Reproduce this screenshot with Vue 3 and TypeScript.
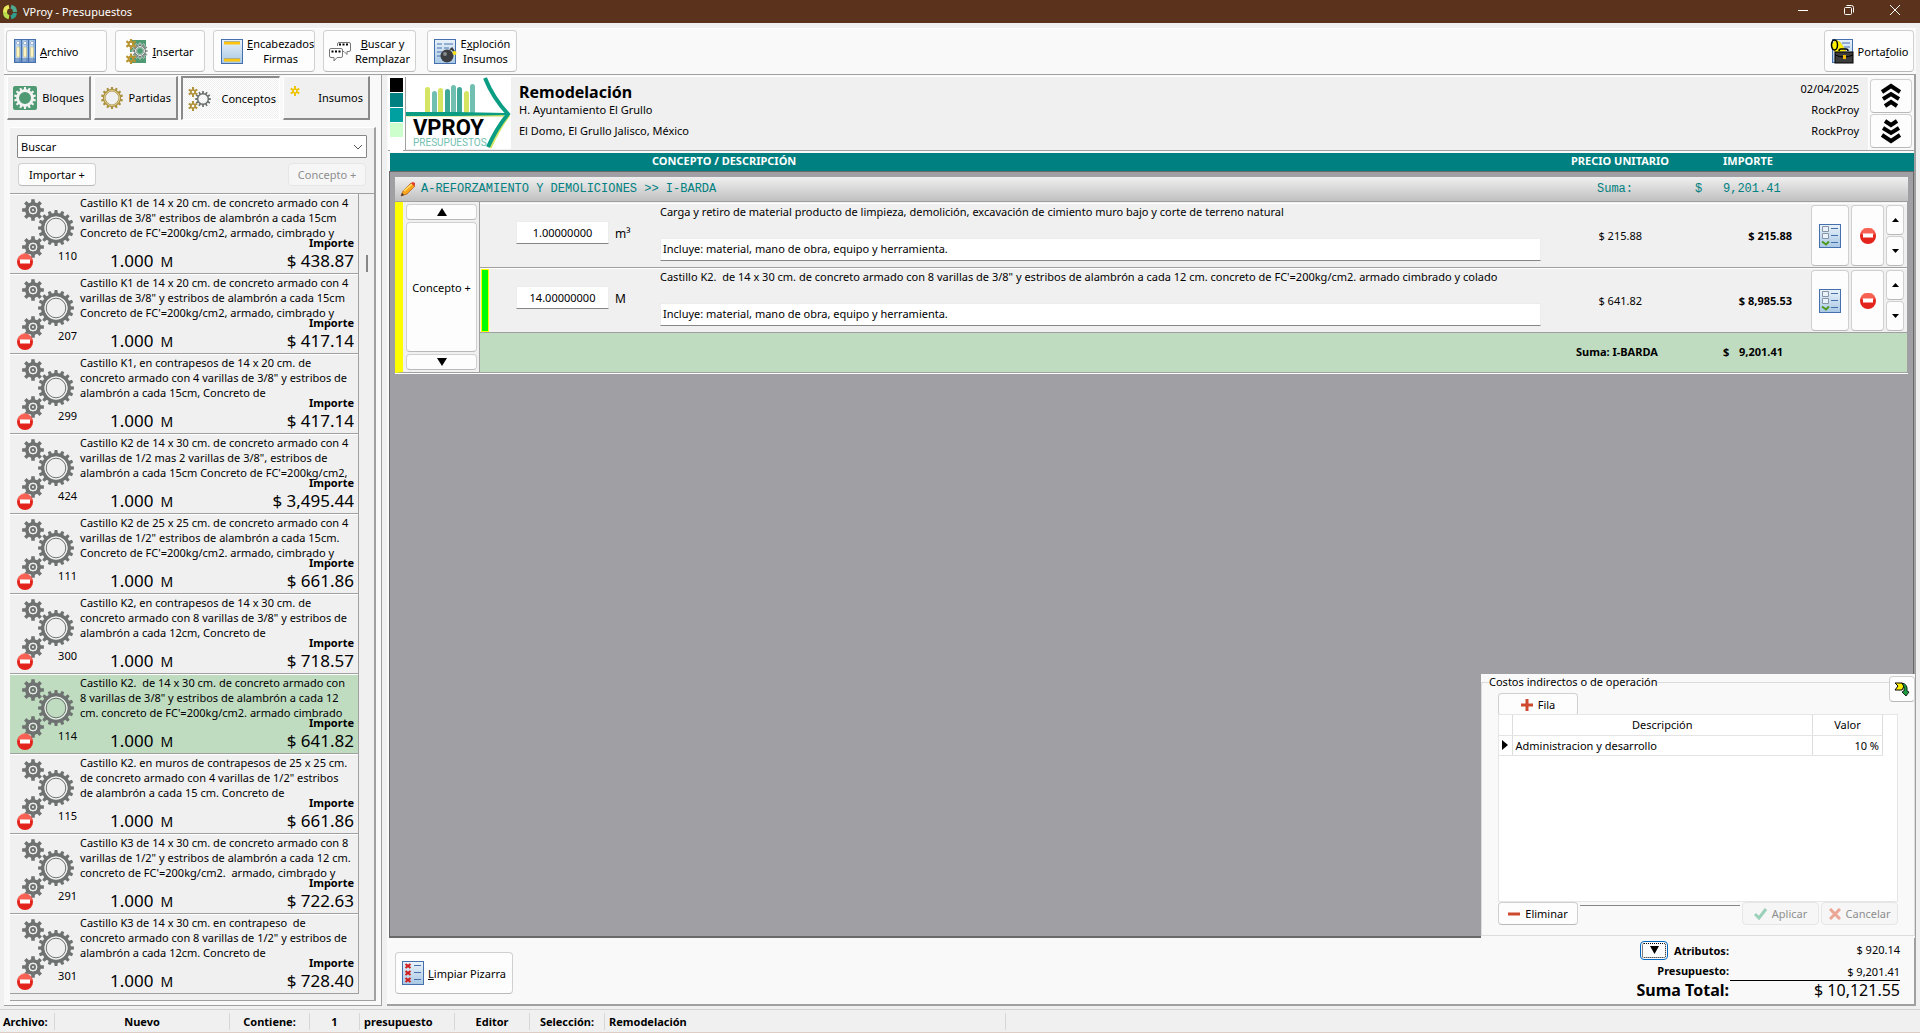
<script setup lang="ts">
interface Concept { id: number; lines: string[]; price: string; selected?: boolean }
interface Row { qty: string; unit: string; desc: string; note: string; unitPrice: string; amount: string; marked: boolean }

const gear = (cx: number, cy: number, outer: number, inner: number, teeth: number, hole = 0): string => {
  const step = (Math.PI * 2) / teeth
  const at = (r: number, a: number) => `${(cx + r * Math.sin(a)).toFixed(2)} ${(cy - r * Math.cos(a)).toFixed(2)}`
  const pts: string[] = []
  for (let i = 0; i < teeth; i++) {
    const a = i * step
    pts.push(at(inner, a - step * 0.3), at(outer, a - step * 0.2), at(outer, a + step * 0.2), at(inner, a + step * 0.3))
  }
  let d = 'M' + pts.join('L') + 'Z'
  if (hole) d += `M${cx - hole} ${cy}a${hole} ${hole} 0 1 0 ${hole * 2} 0a${hole} ${hole} 0 1 0 ${-hole * 2} 0Z`
  return d
}

const concepts: Concept[] = [
  { id: 110, lines: ['Castillo K1 de 14 x 20 cm. de concreto armado con 4', 'varillas de 3/8" estribos de alambrón a cada 15cm', "Concreto de FC'=200kg/cm2, armado, cimbrado y"], price: '438.87' },
  { id: 207, lines: ['Castillo K1 de 14 x 20 cm. de concreto armado con 4', 'varillas de 3/8" y estribos de alambrón a cada 15cm', "Concreto de FC'=200kg/cm2, armado, cimbrado y"], price: '417.14' },
  { id: 299, lines: ['Castillo K1, en contrapesos de 14 x 20 cm. de', 'concreto armado con 4 varillas de 3/8" y estribos de', 'alambrón a cada 15cm, Concreto de'], price: '417.14' },
  { id: 424, lines: ['Castillo K2 de 14 x 30 cm. de concreto armado con 4', 'varillas de 1/2 mas 2 varillas de 3/8", estribos de', "alambrón a cada 15cm Concreto de FC'=200kg/cm2,"], price: '3,495.44' },
  { id: 111, lines: ['Castillo K2 de 25 x 25 cm. de concreto armado con 4', 'varillas de 1/2" estribos de alambrón a cada 15cm.', "Concreto de FC'=200kg/cm2. armado, cimbrado y"], price: '661.86' },
  { id: 300, lines: ['Castillo K2, en contrapesos de 14 x 30 cm. de', 'concreto armado con 8 varillas de 3/8" y estribos de', 'alambrón a cada 12cm, Concreto de'], price: '718.57' },
  { id: 114, lines: ['Castillo K2.  de 14 x 30 cm. de concreto armado con', '8 varillas de 3/8" y estribos de alambrón a cada 12', "cm. concreto de FC'=200kg/cm2. armado cimbrado"], price: '641.82', selected: true },
  { id: 115, lines: ['Castillo K2. en muros de contrapesos de 25 x 25 cm.', 'de concreto armado con 4 varillas de 1/2" estribos', 'de alambrón a cada 15 cm. Concreto de'], price: '661.86' },
  { id: 291, lines: ['Castillo K3 de 14 x 30 cm. de concreto armado con 8', 'varillas de 1/2" y estribos de alambrón a cada 12 cm.', "concreto de FC'=200kg/cm2.  armado, cimbrado y"], price: '722.63' },
  { id: 301, lines: ['Castillo K3 de 14 x 30 cm. en contrapeso  de', 'concreto armado con 8 varillas de 1/2" y estribos de', 'alambrón a cada 12cm. Concreto de'], price: '728.40' },
]

const note = 'Incluye: material, mano de obra, equipo y herramienta.'
const rows: Row[] = [
  { qty: '1.00000000', unit: 'm³', desc: 'Carga y retiro de material producto de limpieza, demolición, excavación de cimiento muro bajo y corte de terreno natural', note, unitPrice: '$ 215.88', amount: '$ 215.88', marked: false },
  { qty: '14.00000000', unit: 'M', desc: "Castillo K2.  de 14 x 30 cm. de concreto armado con 8 varillas de 3/8\" y estribos de alambrón a cada 12 cm. concreto de FC'=200kg/cm2. armado cimbrado y colado", note, unitPrice: '$ 641.82', amount: '$ 8,985.53', marked: true },
]

const bars = [
  { x: 19, y: 13, c: '#d5e563' }, { x: 26, y: 17, c: '#71bfb1' }, { x: 32, y: 14, c: '#d5e563' }, { x: 39, y: 15, c: '#3fa797' },
  { x: 45, y: 11, c: '#71bfb1' }, { x: 51, y: 13, c: '#3fa797' }, { x: 58, y: 17, c: '#d5e563' }, { x: 64, y: 10, c: '#71bfb1' },
]
</script>

<template>
  <div class="app">
    <header class="titlebar">
      <svg width="14" height="16" viewBox="0 0 14 16" fill="none" stroke-width="4">
        <path d="M6 2.600A5 5.400 0 0 0 2 8" stroke="#e8e65a" /><path d="M2 8a5 5.400 0 0 0 4 5.300" stroke="#b9dd4a" />
        <path d="M8 13.400A5 5.400 0 0 0 12 9" stroke="#2f9e8f" /><path d="M12 8A5 5.400 0 0 0 8 2.600" stroke="#4fa98f" />
      </svg>
      <h1>VProy - Presupuestos</h1>
      <div class="winbtns">
        <button aria-label="Minimizar"><svg width="12" height="12"><path d="M1 6.500h10" stroke="#fff" /></svg></button>
        <button aria-label="Restaurar"><svg width="12" height="12" fill="none" stroke="#fff"><rect x="1.500" y="3.500" width="7" height="7" rx="1" /><path d="M3.500 1.500h5q2 0 2 2v5" /></svg></button>
        <button aria-label="Cerrar"><svg width="12" height="12"><path d="M1 1l10 10M11 1L1 11" stroke="#fff" /></svg></button>
      </div>
    </header>

    <nav class="toolbar">
      <button class="btn tool w-archivo">
        <svg width="22" height="25" viewBox="0 0 22 25">
          <g v-for="i in 3" :key="i" :transform="`translate(${(i - 1) * 7} 0)`">
            <rect x=".5" y=".5" width="7" height="23" fill="#8fb4dd" stroke="#4670ad" /><rect x="2" y="1.500" width="3" height="21" fill="#c3d9ef" />
            <circle cx="4" cy="4" r="1.600" fill="#fff" stroke="#7a93b5" stroke-width=".6" /><rect x="2.500" y="8" width="3" height="10" rx="1" fill="#fbf3c0" stroke="#c5b97a" stroke-width=".5" />
            <path d="M1 20h6M1 22h6" stroke="#4670ad" />
          </g>
        </svg>
        <span><u>A</u>rchivo</span>
      </button>
      <button class="btn tool w-insertar">
        <svg width="22" height="25" viewBox="0 0 22 25">
          <path d="M4 1h16v23H4v-6l4-2v-3H4V9l4-1z" fill="#4f9a72" />
          <path :d="gear(14, 12, 8, 6, 12, 3.400)" fill="#6c7270" fill-rule="evenodd" stroke="#e8f0ea" stroke-width=".6" /><circle cx="14" cy="12" r="4.500" fill="none" stroke="#e8f0ea" />
          <path :d="gear(5, 5, 5.500, 3.500, 6, 1.300)" fill="#b8932f" fill-rule="evenodd" /><path :d="gear(5, 20, 5.500, 3.500, 6, 1.300)" fill="#b8932f" fill-rule="evenodd" />
        </svg>
        <span><u>I</u>nsertar</span>
      </button>
      <button class="btn tool w-encab">
        <svg width="22" height="25" viewBox="0 0 22 25">
          <defs><linearGradient id="sheet" x1="0" y1="0" x2="0" y2="1"><stop offset="0" stop-color="#e9f2fa" /><stop offset="1" stop-color="#a9c8e4" /></linearGradient></defs>
          <rect x=".5" y=".5" width="21" height="24" fill="url(#sheet)" stroke="#4670ad" /><path d="M3 4h16M3 21h16" stroke="#fcc40c" stroke-width="3" />
          <path d="M3 2.500h16M3 19.500h16" stroke="#8b9a93" stroke-width=".6" />
        </svg>
        <span><u>E</u>ncabezados<br>Firmas</span>
      </button>
      <button class="btn tool w-buscar">
        <svg width="22" height="24" viewBox="0 0 22 24" fill="#fff" stroke="#777">
          <path d="M8.500 7V5q0-1.500 1.500-1.500h10q1.500 0 1.500 1.500v6q0 1.500-1.500 1.500h-2v3l-3-3h-3" />
          <path d="M2 9.500h10q1.500 0 1.500 1.500v6q0 1.500-1.500 1.500H8l-3 3.500v-3.500H2q-1.500 0-1.500-1.500v-6Q.5 9.500 2 9.500z" />
          <path d="M10 5.500h9M2.500 12.500h9" stroke="#000" stroke-width="2" stroke-dasharray="2 1.500" />
        </svg>
        <span><u>B</u>uscar y<br>Remplazar</span>
      </button>
      <button class="btn tool w-explo">
        <svg width="23" height="25" viewBox="0 0 23 25">
          <rect x=".5" y=".5" width="21" height="24" fill="url(#sheet)" stroke="#4670ad" /><path d="M3 5h5M10 5h9M3 9h5M10 9h5M3 13h5M3 17h4" stroke="#4670ad" />
          <circle cx="13" cy="17" r="6.500" fill="#3b3d40" /><circle cx="11" cy="15" r="2" fill="#85888c" /><path d="M16 11l2-1.500 2 3" stroke="#3b3d40" stroke-width="2" fill="none" />
          <circle cx="20.500" cy="14" r="2" fill="#f6e21b" />
        </svg>
        <span>E<u>x</u>ploción<br>Insumos</span>
      </button>
      <button class="btn tool w-porta">
        <svg width="24" height="25" viewBox="0 0 24 25">
          <rect x="2.500" y=".5" width="20" height="23" fill="url(#sheet)" stroke="#4670ad" /><path d="M12 4h8M14 8h6" stroke="#4670ad" />
          <path d="M1 6l5-5 4 2 6 9-11 1-2-4z" fill="#fff000" stroke="#c8b400" stroke-width=".5" /><ellipse cx="4.500" cy="6" rx="3" ry="5" fill="none" stroke="#000" stroke-width="1.500" />
          <path d="M9 12q0-2 2-2h5q2 0 2 2" fill="none" stroke="#000" stroke-width="1.500" />
          <rect x="5" y="13" width="18" height="11" fill="#3c3c3c" stroke="#000" /><path d="M5 16q9 4 18 0" stroke="#000" fill="none" /><rect x="13" y="16" width="3" height="4" fill="#f5b800" />
        </svg>
        <span>Porta<u>f</u>olio</span>
      </button>
    </nav>

    <main class="work">
      <aside class="side">
        <div class="tabs">
          <button class="tab w-a">
            <svg width="24" height="24" viewBox="0 0 24 24"><rect width="24" height="24" rx="2" fill="#4f9a72" /><path :d="gear(12, 12, 11, 8.800, 14, 6)" fill="#f3f3f3" fill-rule="evenodd" /></svg>
            <span>Bloques</span>
          </button>
          <button class="tab w-a">
            <svg width="24" height="24" viewBox="0 0 24 24"><path :d="gear(12, 12, 11, 9, 14, 6.400)" fill="#ac923f" fill-rule="evenodd" /><circle cx="12" cy="12" r="7.500" fill="none" stroke="#e9dfae" stroke-width=".8" /></svg>
            <span>Partidas</span>
          </button>
          <button class="tab w-b on">
            <svg width="24" height="24" viewBox="0 0 24 24">
              <path :d="gear(15, 12, 8, 6, 12, 4.600)" fill="#6c7270" fill-rule="evenodd" />
              <path :d="gear(5, 5, 5, 3, 6, 1.300)" fill="#b09239" fill-rule="evenodd" /><path :d="gear(5, 19, 5, 3, 6, 1.300)" fill="#b09239" fill-rule="evenodd" />
            </svg>
            <span>Conceptos</span>
          </button>
          <button class="tab w-c">
            <svg width="24" height="24" viewBox="0 0 24 24"><path :d="gear(6, 5, 5, 2.800, 6, 1.200)" fill="#eec400" fill-rule="evenodd" /></svg>
            <span>Insumos</span>
          </button>
        </div>

        <section class="panel">
          <div class="search">
            <select aria-label="Buscar"><option>Buscar</option></select>
            <svg width="10" height="6"><path d="M1 1l4 4 4-4" fill="none" stroke="#555" /></svg>
          </div>
          <div class="actions">
            <button class="btn">Importar +</button>
            <button class="btn" disabled>Concepto +</button>
          </div>
          <div class="listwrap">
            <ul class="list">
              <li v-for="c in concepts" :key="c.id" :class="{ sel: c.selected }">
                <div class="pic">
                  <svg width="66" height="76" viewBox="0 0 66 76">
                    <g fill="#6e7270" fill-rule="evenodd">
                      <path :d="gear(22, 15, 11, 8, 8, 4)" /><path :d="gear(22, 52, 11, 8, 8, 4)" /><path :d="gear(45, 33, 18, 15, 16, 11.500)" />
                    </g>
                    <g fill="none" stroke="#f2f2f2"><circle cx="22" cy="15" r="4" /><circle cx="22" cy="52" r="4" /><circle cx="45" cy="33" r="11" /></g>
                    <g fill="none" stroke="#6e7270"><circle cx="22" cy="15" r="2" stroke-width="2" /><circle cx="22" cy="52" r="2" stroke-width="2" /><circle cx="45" cy="33" r="9.800" /></g>
                    <circle cx="14" cy="67" r="8" fill="#e3241d" /><path d="M7 65a7 7 0 0 1 14 0q-7 4-14 0z" fill="#ff7a6b" opacity=".7" /><rect x="9" y="64.500" width="10" height="4" fill="#fff" />
                  </svg>
                  <span>{{ c.id }}</span>
                </div>
                <div class="info">
                  <p>{{ c.lines.join('\n') }}</p>
                  <b>Importe</b>
                  <div class="nums"><span class="big">1.000</span><span class="mid">M</span><span class="big end">$ {{ c.price }}</span></div>
                </div>
              </li>
            </ul>
            <div class="scroll"><i></i></div>
          </div>
        </section>
      </aside>

      <section class="main">
        <header class="head">
          <div class="swatches"><i class="c1"></i><i class="c2"></i><i class="c3"></i><i class="c4"></i><i class="c5"></i></div>
          <svg class="logo" width="105" height="72" viewBox="0 0 105 72">
            <rect v-for="b in bars" :key="b.x" :x="b.x" :y="b.y - 3" width="5" :height="40 - b.y" rx="2.500" :fill="b.c" />
            <path d="M0 38.500h98" stroke="#c9dd5a" stroke-width="2" /><path d="M0 36h50l50 1-50 1H0z" stroke="#0a9d84" stroke-width="2" fill="#0a9d84" />
            <path d="M84 71q9-20 19-33" fill="none" stroke="#d5e563" stroke-width="3" />
            <path d="M79 1q8 20 23 36-12 15-20 33" fill="none" stroke="#0a9d84" stroke-width="4" />
            <text x="7" y="58" font-family="Roboto, sans-serif" font-weight="700" font-size="22">VPROY</text>
            <text x="7" y="69" font-family="Roboto, sans-serif" font-size="10" fill="#71bfb1">PRESUPUESTOS</text>
          </svg>
          <div class="project"><h2>Remodelación</h2><p>H. Ayuntamiento El Grullo</p><p class="addr">El Domo, El Grullo Jalisco, México</p></div>
          <div class="meta"><span>02/04/2025</span><span>RockProy</span><span>RockProy</span></div>
          <div class="updown">
            <button class="btn" aria-label="Contraer"><svg width="22" height="26" fill="none" stroke="#000" stroke-width="4"><path d="M2 9l9-6 9 6M3 16l8-5 8 5M5 23l6-4 6 4" /></svg></button>
            <button class="btn" aria-label="Expandir"><svg width="22" height="26" fill="none" stroke="#000" stroke-width="4"><path d="M2 17l9 6 9-6M3 10l8 5 8-5M5 3l6 4 6-4" /></svg></button>
          </div>
        </header>

        <div class="colhead"><span>CONCEPTO / DESCRIPCIÓN</span><span>PRECIO UNITARIO</span><span>IMPORTE</span></div>

        <div class="canvas">
          <article class="block">
            <div class="bhead">
              <svg width="16" height="16" viewBox="0 0 16 16"><path d="M1 15l2-5 8-8 4 3-8 8z" fill="#f9a51b" stroke="#b3541a" stroke-width=".7" /><path d="M4 10l8-7" stroke="#ffe36b" stroke-width="1.500" /><path d="M11 2l2-1 2 1v2l-1 1z" fill="#e23b2c" /><path d="M1 15l1-3 2 2z" fill="#333" /></svg>
              <span class="ttl">A-REFORZAMIENTO Y DEMOLICIONES &gt;&gt; I-BARDA</span><span class="s1">Suma:</span><span class="s2">$</span><span class="s3">9,201.41</span>
            </div>
            <div class="bbody">
              <div class="ctl">
                <button class="btn" aria-label="Subir"><svg width="10" height="8"><path d="M0 8l5-8 5 8z" /></svg></button>
                <button class="btn grow">Concepto +</button>
                <button class="btn" aria-label="Bajar"><svg width="10" height="8"><path d="M0 0l5 8 5-8z" /></svg></button>
              </div>
              <div class="rows">
                <div v-for="r in rows" :key="r.qty" class="row">
                  <i class="mark" :class="{ lit: r.marked }"></i>
                  <input class="qty" :value="r.qty" aria-label="Cantidad">
                  <span class="unit">{{ r.unit }}</span>
                  <div class="desc"><p>{{ r.desc }}</p><input :value="r.note" aria-label="Incluye"></div>
                  <span class="pu">{{ r.unitPrice }}</span>
                  <b class="amt">{{ r.amount }}</b>
                  <div class="rbtns">
                    <button class="btn b1" aria-label="Detalle">
                      <svg width="22" height="24" viewBox="0 0 22 24"><rect x=".5" y=".5" width="21" height="23" fill="url(#sheet)" stroke="#4670ad" /><path d="M3.500 2.500h6v5h-6zM3.500 9.500h6v5h-6z" fill="#e9f2fa" stroke="#8795a6" /><path d="M12 4.500h7M12 11.500h7M12 18.500h7" stroke="#4670ad" /><path d="M3 17.500l4 3 3-3" fill="none" stroke="#4c9a1c" stroke-width="2" /></svg>
                    </button>
                    <button class="btn b2" aria-label="Quitar">
                      <svg width="16" height="16"><circle cx="8" cy="8" r="8" fill="#e3241d" /><path d="M1 6a7 7 0 0 1 14 0q-7 4-14 0z" fill="#ff7a6b" opacity=".7" /><rect x="3" y="5.500" width="10" height="4" fill="#fff" /></svg>
                    </button>
                    <div class="pair">
                      <button class="btn" aria-label="Subir"><svg width="7" height="4"><path d="M0 4l3.500-4L7 4z" /></svg></button>
                      <button class="btn" aria-label="Bajar"><svg width="7" height="4"><path d="M0 0l3.500 4L7 0z" /></svg></button>
                    </div>
                  </div>
                </div>
                <div class="total"><b>Suma: I-BARDA</b><b>$</b><b>9,201.41</b></div>
              </div>
            </div>
          </article>

          <section class="popup">
            <fieldset>
              <legend>Costos indirectos o de operación</legend>
              <button class="btn"><svg width="12" height="12"><path d="M6 0v12M0 6h12" stroke="#cd4a2f" stroke-width="3" /></svg>Fila</button>
              <div class="gridbox">
                <table>
                  <thead><tr><th class="ind"></th><th>Descripción</th><th class="val">Valor</th></tr></thead>
                  <tbody><tr><td class="ind"><svg width="7" height="10"><path d="M0 0l6 5-6 5z" /></svg></td><td>Administracion y desarrollo</td><td class="val">10 %</td></tr></tbody>
                </table>
              </div>
              <div class="pfoot">
                <button class="btn"><svg width="12" height="12"><path d="M0 6h12" stroke="#cd4a2f" stroke-width="3" /></svg>Eliminar</button>
                <i></i>
                <button class="btn" disabled><svg width="13" height="12" fill="none"><path d="M1 6l4 4 7-9" stroke="#9bd0b9" stroke-width="3" /></svg>Aplicar</button>
                <button class="btn" disabled><svg width="12" height="12"><path d="M1 1l10 10M11 1L1 11" stroke="#eba695" stroke-width="3" /></svg>Cancelar</button>
              </div>
            </fieldset>
            <button class="btn corner" aria-label="Ocultar panel"><svg width="16" height="15" viewBox="0 0 16 15"><path d="M1 1h7l2 3-2 4H1l3-4z" fill="#fff000" stroke="#000" /><path d="M8 1q6 1 5 8l2 1-3 4-4-4 2-1V5z" fill="#1f9d43" stroke="#000" stroke-width=".8" /></svg></button>
          </section>
        </div>

        <footer class="foot">
          <button class="btn tool clean">
            <svg width="22" height="24" viewBox="0 0 22 24"><rect x=".5" y=".5" width="21" height="23" fill="url(#sheet)" stroke="#4670ad" /><path d="M3.500 3l5 4m0-4l-5 4M3.500 10l5 4m0-4l-5 4M3.500 17l5 4m0-4l-5 4" stroke="#d01c1c" stroke-width="2" /><path d="M12 4.500h7M12 11.500h7M12 18.500h7" stroke="#4670ad" /></svg>
            <span><u>L</u>impiar Pizarra</span>
          </button>
          <dl class="totals">
            <dt><button class="btn focus" aria-label="Mostrar atributos"><svg width="9" height="8"><path d="M0 0l4.500 8L9 0z" /></svg></button>Atributos:</dt><dd>$ 920.14</dd>
            <dt>Presupuesto:</dt><dd class="line">$ 9,201.41</dd>
            <dt class="lg">Suma Total:</dt><dd class="lg">$ 10,121.55</dd>
          </dl>
        </footer>
      </section>
    </main>

    <footer class="status">
      <span class="s-a">Archivo:</span><span class="s-b">Nuevo</span><span class="s-c">Contiene:</span><span class="s-d">1</span><span class="s-e">presupuesto</span><span class="s-f">Editor</span><span class="s-g">Selección:</span><span class="s-h">Remodelación</span>
    </footer>
  </div>
</template>

<style>
body { margin: 0; }
</style>

<style scoped>
* { box-sizing: border-box; }
.app { min-height: 100vh; display: flex; flex-direction: column; background: #f0f0f0; color: #000; font: 11px/15px "Noto Sans", "Open Sans", sans-serif; }
h1, h2, p, ul, dl, dd { margin: 0; padding: 0; font-weight: 400; }
button, input, select { font: inherit; color: inherit; margin: 0; padding: 0; }
svg { display: block; flex: none; }

.btn { display: flex; align-items: center; justify-content: center; gap: 6px; background: #fdfdfd; border: 1px solid #d0d0d0; border-bottom-color: #b9b9b9; border-radius: 4px; white-space: nowrap; }
.btn:disabled { color: #8e8e8e; background: #f6f6f6; border-color: #e6e6e6; }

.titlebar { height: 23px; display: flex; align-items: center; gap: 6px; padding-left: 3px; background: #5b331c; color: #fff; }
.titlebar h1 { font-size: 11px; }
.winbtns { margin-left: auto; display: flex; padding: 0 2px 3px 0; }
.winbtns button { width: 46px; display: flex; justify-content: center; background: none; border: 0; }

.toolbar { display: flex; gap: 8px; margin: 5px 4px 0; padding: 1px 0 3px 2px; height: 47px; background: #f9f9f9; border-top: 1px solid #fff; border-bottom: 1px solid #a0a0a0; }
.tool { height: 42px; gap: 4px; text-align: center; }
.w-archivo { width: 101px; justify-content: flex-start; padding-left: 7px; }
.w-insertar { width: 90px; }
.w-encab { width: 102px; justify-content: flex-start; padding-left: 7px; }
.w-buscar { width: 93px; }
.w-explo { width: 90px; margin-left: 3px; }
.w-porta { width: 90px; margin-left: auto; margin-right: 2px; }

.work { flex: 1; display: flex; gap: 5px; margin: 0 4px 3px; }
.side { width: 378px; display: flex; flex-direction: column; background: #f9f9f9; border-right: 1px solid #a0a0a0; border-bottom: 1px solid #a0a0a0; padding: 1px 5px 4px 2px; }
.tabs { display: flex; gap: 3px; padding-left: 1px; }
.tab { height: 44px; display: flex; align-items: center; justify-content: space-between; padding: 0 5px; background: #f0f0f0; border: 1px solid #fff; border-right: 2px solid #8a8a8a; border-bottom: 2px solid #8a8a8a; }
.tab.on { border: 1px solid #fff; border-top: 2px solid #8a8a8a; border-left: 2px solid #8a8a8a; background: repeating-conic-gradient(#f0f0f0 0 25%, #fff 0 50%) 0 0 / 2px 2px; padding: 0 3px 0 5px; }
.w-a { width: 84px; }
.w-b { width: 99px; }
.w-c { width: 87px; }

.panel { flex: 1; display: flex; flex-direction: column; margin: 7px 0 0 4px; background: #f0f0f0; border-top: 1px solid #fff; border-right: 2px solid #a0a0a0; border-bottom: 1px solid #a0a0a0; }
.search { display: grid; align-items: center; margin: 7px 7px 0; }
.search > * { grid-area: 1 / 1; }
.search select { appearance: none; height: 23px; padding: 0 3px; background: #fff; border: 1px solid #868686; border-radius: 1px; }
.search svg { justify-self: end; margin-right: 4px; pointer-events: none; }
.actions { display: flex; justify-content: space-between; padding: 5px 8px 7px; }
.actions .btn { width: 78px; height: 23px; }
.listwrap { flex: 1; display: flex; border-top: 1px solid #a0a0a0; padding-bottom: 6px; }
.list { width: 349px; list-style: none; border-right: 1px solid #a0a0a0; }
.list li { display: flex; height: 80px; border-top: 1px solid #fff; border-bottom: 1px solid #a0a0a0; }
.list li.sel { background: #bfdcc1; }
.pic { width: 70px; display: flex; align-items: flex-start; position: relative; padding-left: 1px; }
.pic span { position: absolute; right: 3px; top: 53px; }
.info { flex: 1; display: flex; flex-direction: column; padding: 0 4px 0 0; min-width: 0; }
.info p { white-space: pre; height: 40px; }
.info b { align-self: flex-end; }
.nums { display: flex; align-items: baseline; padding-left: 30px; gap: 7px; line-height: 21px; }
.big { font-size: 17px; }
.mid { font-size: 14px; }
.end { margin-left: auto; }
.scroll { flex: 1; display: flex; justify-content: center; padding-top: 61px; }
.scroll i { width: 2px; height: 17px; background: #868686; }

.main { flex: 1; min-width: 0; display: flex; flex-direction: column; background: #f9f9f9; border-right: 2px solid #a0a0a0; border-bottom: 2px solid #a0a0a0; padding: 1px 0 0 1px; }
.head { display: flex; height: 75px; border-top: 1px solid #fff; border-bottom: 1px solid #a0a0a0; background: #f0f0f0; }
.swatches { display: grid; gap: 1px; grid-auto-rows: 14px; width: 18px; padding: 1px 2px; background: #fff; border-right: 1px solid #a0a0a0; }
.c1 { background: #000; } .c2 { background: #008080; } .c3 { background: #00a0a0; } .c4 { background: #ccffcc; } .c5 { background: #fff; }
.logo { background: #fff; }
.project { padding: 5px 0 0 8px; }
.project h2 { font-size: 16px; font-weight: 700; line-height: 20px; }
.project .addr { padding-top: 6px; }
.meta { margin-left: auto; display: flex; flex-direction: column; gap: 6px; text-align: right; padding: 4px 9px 0 0; }
.updown { display: grid; gap: 1px; padding: 2px 2px 0 1px; background: #f9f9f9; border-left: 1px solid #fff; align-content: start; }
.updown .btn { width: 42px; height: 34px; }
.colhead { display: flex; height: 18px; margin: 2px 0 0 2px; background: #008080; color: #fff; font-weight: 700; line-height: 15px; padding-left: 262px; }
.colhead span:nth-child(1) { flex: 1; }
.colhead span:nth-child(2) { width: 152px; }
.colhead span:nth-child(3) { width: 191px; }

.canvas { flex: 1; position: relative; margin-left: 1px; padding: 5px; background: #a09fa4; border: 1px solid #696969; border-bottom-width: 2px; }
.block { background: #f0f0f0; border-bottom: 1px solid #fff; }
.bhead { display: flex; align-items: center; height: 25px; padding-left: 5px; background: linear-gradient(#f0f0f0, #c0c0c0); border-bottom: 1px solid #a0a0a0; color: #008080; font: 12px/15px "Liberation Mono", monospace; }
.ttl { flex: 1; padding-left: 5px; }
.s1 { width: 98px; } .s2 { width: 28px; } .s3 { width: 185px; }
.bbody { display: flex; border-left: 8px solid #ff0; border-right: 1px solid #a0a0a0; border-bottom: 1px solid #a0a0a0; }
.ctl { width: 77px; display: flex; flex-direction: column; gap: 2px; padding: 2px 2px 2px 3px; border-right: 1px solid #a0a0a0; }
.ctl .btn { height: 16px; }
.ctl .grow { flex: 1; }
.rows { flex: 1; min-width: 0; padding-top: 1px; }
.row { display: flex; align-items: center; height: 65px; border-bottom: 1px solid #a0a0a0; border-top: 1px solid #fff; }
.mark { align-self: stretch; width: 8px; margin-left: 1px; }
.mark.lit { background: #0f0; border: 1px solid #ff0; }
.qty { width: 93px; height: 23px; margin-left: 27px; margin-bottom: 6px; text-align: center; background: #fff; border: 1px solid #ececec; border-bottom: 1px solid #868686; }
.unit { width: 51px; padding: 0 0 4px 6px; font-size: 12px; }
.desc { flex: 1; min-width: 0; align-self: stretch; display: flex; flex-direction: column; justify-content: space-between; padding: 0 0 6px; }
.desc p { white-space: pre; }
.desc input { width: 100%; height: 23px; padding: 0 2px 2px; background: #fff; border: 1px solid #ececec; border-bottom: 1px solid #868686; }
.pu { width: 101px; text-align: right; }
.amt { width: 150px; text-align: right; }
.rbtns { display: flex; gap: 2px; width: 115px; padding: 0 3px 0 19px; height: 61px; }
.rbtns .b1 { width: 38px; }
.rbtns .b2 { width: 33px; }
.pair { flex: 1; display: grid; gap: 1px; }
.total { display: flex; height: 39px; align-items: center; justify-content: flex-end; padding-bottom: 2px; background: #bfdcc1; }
.total b:nth-child(1) { width: 147px; }
.total b:nth-child(2) { width: 16px; }
.total b:nth-child(3) { width: 168px; }

.popup { position: absolute; right: -2px; bottom: -2px; width: 434px; background: #f9f9f9; padding: 1px 0 2px; }
.popup fieldset { margin: 0; padding: 4px 16px 10px; border: 1px solid #dcdcdc; min-width: 0; height: 261px; display: flex; flex-direction: column; }
.popup legend { margin-left: -9px; padding: 0; line-height: 14px; }
.popup fieldset .btn { width: 80px; height: 23px; gap: 5px; }
.popup fieldset .btn:disabled { width: 77px; }
.gridbox { flex: 1; margin-top: -2px; background: #fff; border: 1px solid #e6e6e6; }
.gridbox table { width: 384px; border-collapse: collapse; table-layout: fixed; }
.gridbox th, .gridbox td { height: 20px; padding: 0 3px; font-weight: 400; border-right: 1px solid #dcdcdc; border-bottom: 1px solid #e4e4e4; }
.gridbox .ind { width: 13px; }
.gridbox .val { width: 70px; }
.gridbox td.val { text-align: right; }
.gridbox th:nth-child(2), .gridbox th.val { text-align: center; }
.pfoot { display: flex; gap: 2px; }
.pfoot i { flex: 1; height: 4px; border-bottom: 1px solid #868686; }
.corner { position: absolute; right: 0; top: 2px; width: 26px; height: 26px; }

.foot { display: flex; justify-content: space-between; align-items: flex-start; height: 66px; padding: 2px 14px 0 7px; }
.clean { width: 118px; margin-top: 12px; padding: 0; }
.totals { display: grid; grid-template-columns: auto 170px; text-align: right; }
.totals dt { display: flex; align-items: center; justify-content: flex-end; gap: 6px; height: 20px; font-weight: 700; padding-right: 1px; }
.totals dd { height: 20px; line-height: 20px; }
.totals dd.line { line-height: 23px; height: 21px; border-bottom: 1px solid #000; }
.totals .lg { font-size: 16px; height: 18px; line-height: 18px; }
.totals .focus { width: 28px; height: 19px; border-color: #0067c0; outline: 1px dotted #000; outline-offset: -3px; }

.status { display: flex; height: 24px; padding: 3px 0 2px; border-top: 1px solid #d0d0d0; border-bottom: 1px solid #dcccc4; font-weight: 700; line-height: 17px; text-align: center; }
.status span { border-right: 1px solid #d7d7d7; white-space: nowrap; }
.s-a { width: 55px; } .s-b { width: 175px; } .s-c { width: 80px; } .s-d { width: 50px; } .s-e { width: 95px; } .s-f { width: 75px; } .s-g { width: 75px; } .s-h { width: 401px; }
.status .s-e, .status .s-h { text-align: left; padding-left: 4px; }
.status .s-a { text-align: left; padding-left: 3px; }
</style>
